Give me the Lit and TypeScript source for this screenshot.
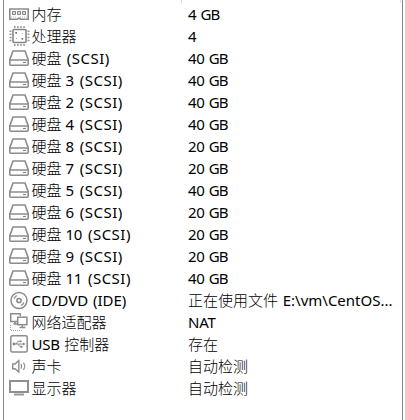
import { LitElement, html, css, svg } from "lit";
import { customElement, property } from "lit/decorators.js";

type IconName = "memory" | "cpu" | "disk" | "cd" | "network" | "usb" | "sound" | "display";

const icons = {
  memory: svg`
    <path d="M.8 6H19.2V16.2H11.5L10.5 15.2H9.5L8.5 16.2H.8Z" fill="none" stroke="#8c8c8c" stroke-width="1.6"/>
    <path d="M3.5 8.5h3v3h-3zM8.5 8.5h3v3h-3zM13.5 8.5h3v3h-3z" fill="#ddd" stroke="#858585"/>
    <path d="M2 14H8M11 14H18" stroke="#bbb" stroke-dasharray="1 1"/>`,
  cpu: svg`
    <rect x="4" y="4.5" width="13" height="13" rx="1" fill="none" stroke="#858585" stroke-width="1.6"/>
    <path d="M5 2H16M5 20H16" stroke="#999" stroke-width="2" stroke-dasharray="1.5 1.6"/>
    <path d="M1.5 5.5V16.5M19.5 5.5V16.5" stroke="#999" stroke-width="2" stroke-dasharray="1.5 1.6"/>
    <path d="M6.3 7h1.7v1.7H6.3zM12.5 13h1.7v1.7h-1.7z" fill="#777"/>
    <path d="M7 13h1v1H7zM13 8h1v1h-1z" fill="#aaa"/>`,
  disk: svg`
    <path d="M4 4H16L19.2 12.7V17.2Q19.2 18.2 18.2 18.2H1.8Q.8 18.2 .8 17.2V12.7Z" fill="none" stroke="#8c8c8c" stroke-width="1.6"/>
    <path d="M1 13H19" stroke="#8c8c8c" stroke-width="1.5"/>
    <path d="M14 15.5H17" stroke="#888" stroke-width="1.2"/>`,
  cd: svg`
    <circle cx="10" cy="11.5" r="8" fill="none" stroke="#8c8c8c" stroke-width="1.5"/>
    <circle cx="10" cy="11.5" r="2.1" fill="none" stroke="#888" stroke-width="1.5"/>
    <path d="M5 9.6Q6 7.3 8 6.6M12 16.4Q14 15.7 15 13.4" fill="none" stroke="#999" stroke-width="1.4"/>`,
  network: svg`
    <path d="M8 10.5H1.7V2.8H11.3V5M4.5 13H8M6 10.5V13" fill="none" stroke="#8c8c8c" stroke-width="1.5"/>
    <rect x="8.7" y="6.2" width="9.2" height="7.5" fill="#fff" stroke="#8c8c8c" stroke-width="1.5"/>
    <path d="M13.3 14V16M10.5 16.5H16.5" stroke="#8c8c8c" stroke-width="1.4"/>
    <path d="M1.5 14V19.5H12.5V18" fill="none" stroke="#999" stroke-dasharray="1 1"/>`,
  usb: svg`
    <rect x="1.8" y="2.8" width="16.4" height="16.2" rx="1.5" fill="none" stroke="#8c8c8c" stroke-width="1.5"/>
    <path d="M5 11H15M7 11L9 8.3H11M9 11L11 13.7H12" fill="none" stroke="#888"/>
    <circle cx="5" cy="11" r="1.4" fill="#888"/>
    <circle cx="11.7" cy="8.3" r="1" fill="#888"/>
    <path d="M11.5 12.7h2v2h-2zM14 9.5l2.5 1.5L14 12.5z" fill="#888"/>`,
  sound: svg`
    <path d="M3.7 9H6L9.8 5.6V17L6 13.7H3.7Z" fill="none" stroke="#8c8c8c" stroke-width="1.4"/>
    <path d="M12 9Q13.4 11.3 12 13.6" fill="none" stroke="#888" stroke-width="1.3"/>
    <path d="M14.3 7.7Q17.4 11.3 14.3 15" fill="none" stroke="#999" stroke-width="1.3"/>`,
  display: svg`
    <rect x="1" y="4" width="18" height="11" fill="none" stroke="#909090" stroke-width="2"/>
    <path d="M5 17.5H15" stroke="#999" stroke-width="2"/>`,
};

const devices: [IconName, string, string][] = [
  ["memory", "内存", "4 GB"],
  ["cpu", "处理器", "4"],
  ["disk", "硬盘 (SCSI)", "40 GB"],
  ["disk", "硬盘 3 (SCSI)", "40 GB"],
  ["disk", "硬盘 2 (SCSI)", "40 GB"],
  ["disk", "硬盘 4 (SCSI)", "40 GB"],
  ["disk", "硬盘 8 (SCSI)", "20 GB"],
  ["disk", "硬盘 7 (SCSI)", "20 GB"],
  ["disk", "硬盘 5 (SCSI)", "40 GB"],
  ["disk", "硬盘 6 (SCSI)", "20 GB"],
  ["disk", "硬盘 10 (SCSI)", "20 GB"],
  ["disk", "硬盘 9 (SCSI)", "20 GB"],
  ["disk", "硬盘 11 (SCSI)", "40 GB"],
  ["cd", "CD/DVD (IDE)", "正在使用文件 E:\\vm\\CentOS..."],
  ["network", "网络适配器", "NAT"],
  ["usb", "USB 控制器", "存在"],
  ["sound", "声卡", "自动检测"],
  ["display", "显示器", "自动检测"],
];

@customElement("device-row")
class DeviceRow extends LitElement {
  @property() icon: IconName = "disk";
  @property() name = "";
  @property() summary = "";

  static styles = css`
    :host { display: grid; grid-template-columns: 22.5px 156.5px 1fr; height: 22px; }
    .icon { display: block; width: 21px; height: 22px; }
    .text { white-space: pre; line-height: 22px; }
    .han { font-weight: 300; }
    .latin { word-spacing: 0.8px; }
    .digits { letter-spacing: -0.4px; word-spacing: 0.5px; }
    .unit { letter-spacing: -0.9px; word-spacing: 1.4px; }
    .bus { letter-spacing: 0.5px; word-spacing: 0.8px; }
    .digits + .bus { word-spacing: 1.6px; }
    .short { letter-spacing: -0.27px; word-spacing: 1px; }
  `;

  private runClass(run: string) {
    if (/[\u4e00-\u9fff]/.test(run)) return "han";
    if (/GB/.test(run)) return "unit";
    if (/SCSI/.test(run)) return "bus";
    if (/\d/.test(run)) return "digits";
    if (/USB|NAT/.test(run)) return "short";
    return "latin";
  }

  private label(text: string) {
    const runs = text.match(/[\u4e00-\u9fff]+| ?\(SCSI\)| GB| ?\d+|[^\u4e00-\u9fff\d]+/g) ?? [];
    return runs.map((run) => html`<span class=${this.runClass(run)}>${run}</span>`);
  }

  render() {
    return html`<svg class="icon" viewBox="0 0 21 22">${icons[this.icon]}</svg><div class="text">${this.label(this.name)}</div><div class="text">${this.label(this.summary)}</div>`;
  }
}

@customElement("app-root")
class AppRoot extends LitElement {
  static styles = css`
    :host {
      display: block; position: relative; box-sizing: border-box; width: 405px; height: 420px;
      padding: 0 2px 0 3px; background: #fff; overflow: hidden;
      font: 15px "Noto Sans", "Noto Sans CJK SC", sans-serif; color: #000;
    }
    .list { box-sizing: border-box; height: 420px; padding: 3px 0 0 5px; border: solid #828790; border-width: 0 1px; }
    .divider { position: absolute; top: 0; left: 181px; width: 1px; height: 3px; background: #dcdcdc; }
    .end { left: 400px; }
  `;

  render() {
    return html`
      <div class="list">
        ${devices.map(([icon, name, summary]) => html`<device-row .icon=${icon} .name=${name} .summary=${summary}></device-row>`)}
      </div>
      <div class="divider"></div>
      <div class="divider end"></div>
    `;
  }
}
